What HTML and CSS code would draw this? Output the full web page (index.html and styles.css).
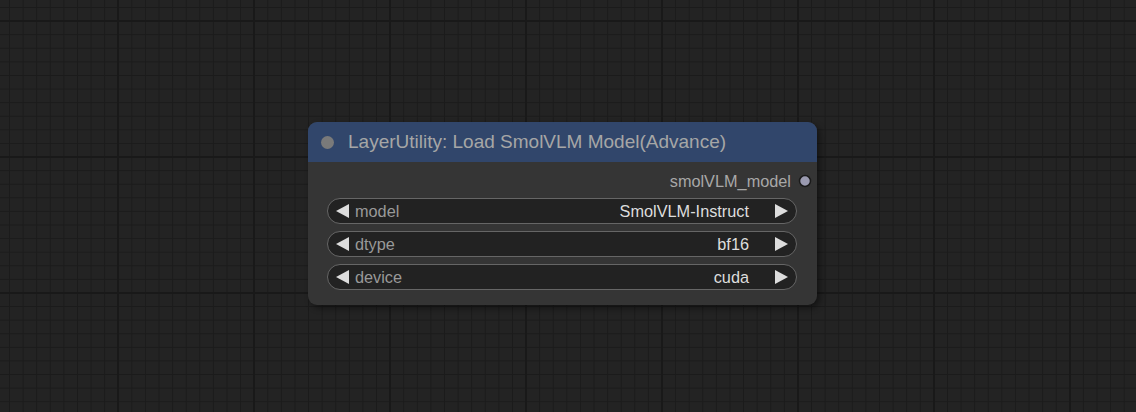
FILE: index.html
```html
<!DOCTYPE html>
<html>
<head>
<meta charset="utf-8">
<link rel="stylesheet" href="styles.css">
</head>
<body>
<div class="canvas">
  <div class="node">
    <div class="title">
      <span class="title-dot"></span>
      <span class="title-text">LayerUtility: Load SmolVLM Model(Advance)</span>
    </div>
    <div class="body">
      <div class="output">
        <span class="output-label">smolVLM_model</span>
        <svg class="slot" width="14" height="14" viewBox="0 0 14 14"><circle cx="7" cy="7" r="5.5" fill="#9a9ab0" stroke="#1a1a1a" stroke-width="1.5"/></svg>
      </div>
      <div class="widget">
        <span class="arrow left"></span>
        <span class="label">model</span>
        <span class="value">SmolVLM-Instruct</span>
        <span class="arrow right"></span>
      </div>
      <div class="widget">
        <span class="arrow left"></span>
        <span class="label">dtype</span>
        <span class="value">bf16</span>
        <span class="arrow right"></span>
      </div>
      <div class="widget">
        <span class="arrow left"></span>
        <span class="label">device</span>
        <span class="value">cuda</span>
        <span class="arrow right"></span>
      </div>
    </div>
  </div>
</div>
</body>
</html>
```
FILE: styles.css
```css
html, body {
  margin: 0;
  padding: 0;
}
body {
  width: 1136px;
  height: 412px;
  overflow: hidden;
  font-family: "Liberation Sans", Arial, sans-serif;
}
.canvas {
  position: relative;
  width: 1136px;
  height: 412px;
  background-color: #232323;
  background-image:
    linear-gradient(to right, #191919 0, #191919 2px, transparent 2px),
    linear-gradient(to bottom, #191919 0, #191919 2px, transparent 2px),
    linear-gradient(to right, #1b1b1b 0, #1b1b1b 1px, transparent 1px),
    linear-gradient(to bottom, #1b1b1b 0, #1b1b1b 1px, transparent 1px);
  background-size: 136px 136px, 136px 136px, 13.6px 13.6px, 13.6px 13.6px;
  background-position: 117px 20px, 117px 20px, 9px 7px, 9px 7px;
}
.node {
  position: absolute;
  left: 308px;
  top: 122px;
  width: 509px;
  border-radius: 9px;
  background: #353535;
  box-shadow: 3px 3px 6px rgba(0, 0, 0, 0.45);
  overflow: hidden;
}
.title {
  height: 40px;
  background: #31466b;
  display: flex;
  align-items: center;
  box-sizing: border-box;
  padding-left: 13px;
}
.title-dot {
  width: 13px;
  height: 13px;
  border-radius: 50%;
  background: #7a7a7a;
  margin-right: 14px;
  flex-shrink: 0;
}
.title-text {
  color: #a6a6a6;
  font-size: 19px;
  line-height: 20px;
}
.body {
  padding: 10px 20px 15px 19px;
  display: flex;
  flex-direction: column;
  gap: 7px;
}
.output {
  height: 18px;
  display: flex;
  align-items: center;
  justify-content: flex-end;
  margin-right: -15px;
  margin-bottom: 1px;
}
.output-label {
  color: #a8a8a8;
  font-size: 16.3px;
  margin-right: 7px;
}
.slot {
  flex-shrink: 0;
  display: block;
}
.widget {
  height: 26px;
  box-sizing: border-box;
  border: 1px solid #666666;
  border-radius: 13px;
  background: #222222;
  display: flex;
  align-items: center;
  padding: 0 8px 0 8px;
  font-size: 16.3px;
}
.arrow {
  width: 0;
  height: 0;
  flex-shrink: 0;
  border-top: 7px solid transparent;
  border-bottom: 7px solid transparent;
}
.arrow.left {
  border-right: 13px solid #dddddd;
  margin-right: 6px;
}
.arrow.right {
  border-left: 13px solid #dddddd;
  margin-left: 26px;
}
.label {
  color: #999999;
  flex: 1;
}
.value {
  color: #dddddd;
}
```
